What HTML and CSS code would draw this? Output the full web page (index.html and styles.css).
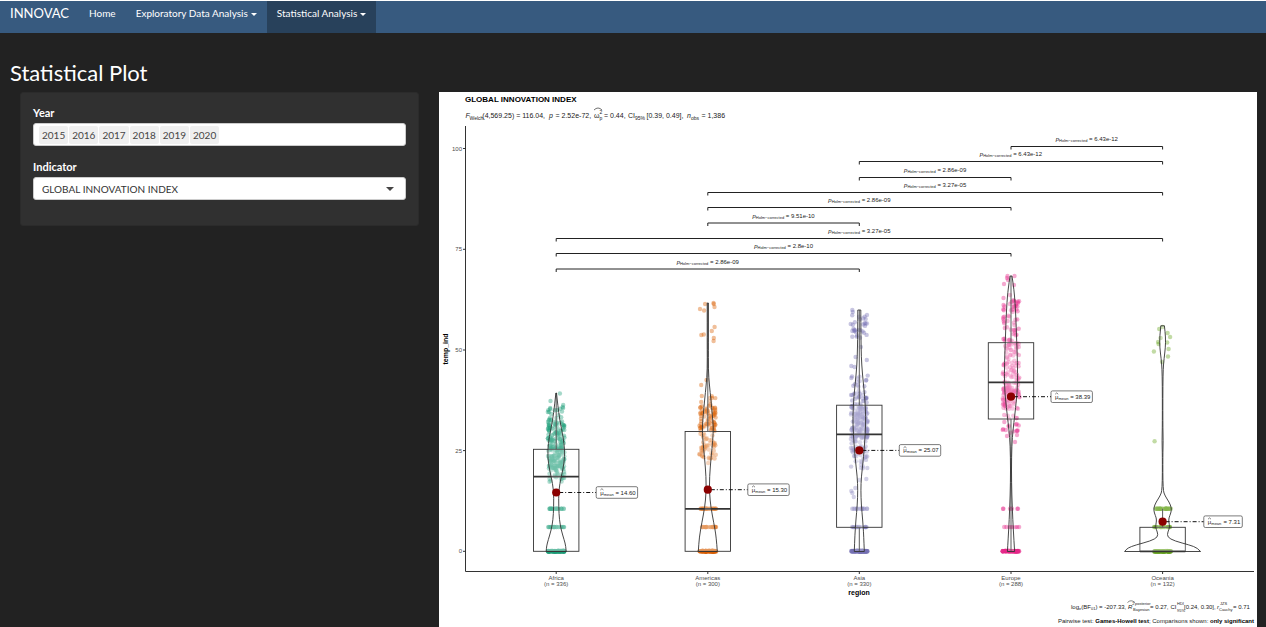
FILE: index.html
```html
<!DOCTYPE html>
<html lang="en">
<head>
<meta charset="utf-8">
<title>INNOVAC</title>
<link rel="stylesheet" href="styles.css">
</head>
<body>
<nav class="navbar">
  <a class="brand" href="#">INNOVAC</a>
  <a class="nav-item" href="#">Home</a>
  <button class="nav-item" type="button">Exploratory Data Analysis<span class="caret"></span></button>
  <button class="nav-item active" type="button">Statistical Analysis<span class="caret"></span></button>
</nav>
<h1 class="page-title">Statistical Plot</h1>
<main class="layout">
  <form class="well">
    <div class="field">
      <label for="year">Year</label>
      <div class="tags">
        <span class="tag">2015</span><span class="tag">2016</span><span class="tag">2017</span><span class="tag">2018</span><span class="tag">2019</span><span class="tag">2020</span>
        <input id="year" type="text" autocomplete="off">
      </div>
    </div>
    <div class="field">
      <label for="indicator">Indicator</label>
      <div class="select-wrap">
        <select id="indicator"><option>GLOBAL INNOVATION INDEX</option></select>
        <span class="caret select-caret"></span>
      </div>
    </div>
  </form>
  <section class="plot">
    <svg id="chart" class="chart" viewBox="439 92 818 535" role="img" aria-label="Global Innovation Index by region"></svg>
  </section>
</main>
<script src="chart.js"></script>
</body>
</html>
```
FILE: styles.css
```css
* { box-sizing: border-box; }
body {
  margin: 0;
  border-top: 1px solid #fff;
  background: #222;
  color: #fff;
  font: 10px/16px Lato, "Open Sans", sans-serif;
}
.navbar {
  display: flex;
  height: 32px;
  background: #375a7f;
}
.brand, .nav-item {
  display: flex;
  align-items: flex-start;
  padding: 4px 10px;
  border: 0;
  background: none;
  color: #fff;
  font: inherit;
  text-decoration: none;
  white-space: nowrap;
}
.brand { font-size: 13px; }
.nav-item.active { background: #28415b; }
.caret {
  align-self: flex-start;
  margin: 8px 0 0 3px;
  border: 3px solid transparent;
  border-top-color: currentColor;
  border-bottom: 0;
}
.page-title {
  margin: 0;
  padding: 26px 10px 5px;
  font-size: 22px;
  line-height: 28px;
  font-weight: 400;
}
.layout {
  display: grid;
  grid-template-columns: 399fr 818fr;
  gap: 20px;
  align-items: start;
  padding: 0 9px 0 20px;
}
.well {
  padding: 12px;
  border: 1px solid #2b2b2b;
  border-radius: 3px;
  background: #303030;
}
.field { margin-bottom: 13px; }
.field label {
  display: block;
  margin-bottom: 2px;
  font-size: 11px;
  font-weight: 700;
}
.tags, .select-wrap {
  display: flex;
  align-items: center;
  position: relative;
  height: 23px;
  border: 1px solid #ccc;
  border-radius: 3px;
  background: #fff;
  color: #464545;
}
.tags {
  gap: 1px;
  padding: 0 5px;
}
.tag {
  padding: 1px 3px;
  border-radius: 2px;
  background: #efefef;
}
.tags input {
  flex: 1;
  min-width: 0;
  border: 0;
  outline: 0;
  background: none;
  font: inherit;
}
.select-wrap select {
  width: 100%;
  height: 100%;
  padding: 0 8px;
  border: 0;
  appearance: none;
  background: none;
  color: #333;
  font: inherit;
}
.select-caret {
  position: absolute;
  top: 9px;
  right: 11px;
  margin: 0;
  border-width: 4px;
  border-bottom: 0;
  pointer-events: none;
}
.plot { background: #fff; }
.chart {
  display: block;
  width: 100%;
  font-family: "Liberation Sans", Arial, sans-serif;
  font-size: 6px;
  fill: #222;
}
.chart .title { font-size: 8px; font-weight: 700; fill: #000; }
.chart .subtitle { font-size: 7px; }
.chart .axis-title { font-size: 7px; font-weight: 700; fill: #000; }
.chart .tick { fill: #4d4d4d; }
.chart .sub { font-size: 4px; }
.chart .sub5 { font-size: 5px; }
.chart .it { font-style: italic; }
.chart .b { font-weight: 700; fill: #000; }
.chart .line { fill: none; stroke: #333; stroke-width: 1; }
.chart .bracket { fill: none; stroke: #222; stroke-width: 1; }
.chart .shape { fill: #fff; fill-opacity: .2; stroke: #333; stroke-width: .9; }
.chart .median { stroke: #333; stroke-width: 1.7; }
.chart .leader { stroke: #111; stroke-width: 1; stroke-dasharray: 1 2 4 2; }
.chart .callout { fill: #fff; stroke: #444; stroke-width: .7; }
```
FILE: chart.js
```js
const out = [];
const add = s => out.push(s);
const label = (x, y, s, cls = "", anchor = "start") =>
  add(`<text x="${x}" y="${y}" class="${cls}" text-anchor="${anchor}">${s}</text>`);

let seed = 17;
const rand = () => (seed = (seed * 16807) % 2147483647) / 2147483647;

// profile: [y, half width]; bands: [yMin, yMax, count]; dots: [dx, y]
const groups = [
  { name: "Africa", n: 336, x: 556.2, color: "#1b9e77", mean: 492.5, value: "14.60",
    box: [449.3, 476.7, 551.3], whisker: [393, 551],
    profile: [[393,.3],[405,1.6],[420,3.5],[437,7],[450,8.5],[463,8],[477,5],[490,2.5],[507,2.5],[520,3.2],[530,5],[540,8],[546,9.6],[551.5,10]],
    bands: [[408,425,26],[424,440,50],[438,468,135],[464,482,42],[508.7,508.8,24],[527,527.1,24],[550.8,551.6,100]],
    dots: [[3.7,393.5],[-5.7,401],[-6,408],[7,405],[6.5,407],[-5,414],[-6,409]] },
  { name: "Americas", n: 300, x: 707.8, color: "#d95f02", mean: 489.7, value: "15.30",
    box: [431.5, 508.8, 551.3], whisker: [303, 551],
    profile: [[303,.6],[345,.6],[370,.5],[385,1.6],[400,3.2],[415,4.5],[427,5.6],[440,5],[457,3.3],[477,1.7],[493,1.7],[507,3],[523,6],[537,8.5],[551.5,9.5]],
    bands: [[395,408,14],[407,425,45],[422,448,48],[445,463,26],[508.7,508.8,26],[527,527.1,26],[550.8,551.6,100]],
    dots: [[-2.7,304],[5.7,303],[6,304],[6.7,307],[-7.8,309],[-3.7,310.5],[6.8,327],[4,331],[-6.5,335],[-4,334.5],[6,338],[5.8,341],[-1.3,380],[-6.6,385],[-6,396]] },
  { name: "Asia", n: 330, x: 859.3, color: "#7570b3", mean: 450.4, value: "25.07",
    box: [405.2, 434.3, 527.3], whisker: [310, 551],
    profile: [[310,1.5],[335,1.6],[357,2],[373,3],[397,5.5],[417,6.5],[433,6],[457,4.3],[477,2],[490,1.5],[505,2],[520,3.4],[535,4.4],[551.5,5]],
    bands: [[315,340,24],[375,395,16],[393,410,34],[407,438,120],[435,456,45],[455,470,16],[508.7,508.8,15],[527,527.1,15],[550.8,551.6,100]],
    dots: [[-7,310],[-6.5,312],[7.7,315],[-8.6,324],[-5,330],[-5,331],[-3.5,332],[-7,331],[1.5,347],[-3.7,357],[7.5,360],[-8,366],[-4.7,367],[-8,378],[7,380],[7,479],[-4,488],[-8,491],[-7,493],[-5.5,497],[0,480],[8,468]] },
  { name: "Europe", n: 288, x: 1011, color: "#e7298a", mean: 396.7, value: "38.39",
    box: [342.7, 382.3, 419], whisker: [276, 551],
    profile: [[276,1],[290,3],[302,4],[318,4.9],[342,5.7],[362,6.5],[385,6.6],[400,5.4],[415,3.8],[430,2],[445,.8],[470,.4],[495,.8],[520,1.8],[540,2.9],[551.5,3.6]],
    bands: [[300,325,36],[325,345,26],[343,375,55],[374,392,48],[390,410,56],[415,433,20],[527,527.1,9],[550.8,551.6,70]],
    dots: [[-3.5,276],[3.5,276],[-3,280],[-7,284],[3,285],[-4,278],[-7.5,298],[-1,295],[7,303],[-7.5,305],[4,442],[-4,436],[6,435],
      [-8,508.8],[-7.6,508.8],[7,508.8],[6.4,508.8],[0,508.8],[-1,508.8],[1,508.8]] },
  { name: "Oceania", n: 132, x: 1162.6, color: "#66a61e", mean: 521.7, value: "7.31",
    box: [527.3, 551.3, 551.3], whisker: [508.8, 551],
    profile: [[325.8,1.8],[337,3],[348,2.8],[358,1.5],[372,.3],[425,.2],[441,.6],[455,.2],[490,.3],[496,2.5],[502,6.5],[508,9],[513,8.3],[518,6.2],[522,6.2],[527,7.2],[532,5.2],[537,4.6],[541,12],[545,27],[548,35],[551.5,38]],
    bands: [[508.7,508.8,30],[527,527.1,24],[551,551.8,75]],
    dots: [[-3.4,329],[0,327],[5,333],[7.5,337],[-4.5,342],[-4,344],[4.6,342.5],[6,349],[-8.7,351.5],[5.4,356.5],[-.5,362],[-2,338],[-8,441.3]] }
];

// Smooth curve through the points by way of their midpoints
function curve(points) {
  let d = "";
  for (let i = 1; i < points.length - 1; i++) {
    const [x, y] = points[i], [nx, ny] = points[i + 1];
    d += `Q${x},${y} ${(x + nx) / 2},${(y + ny) / 2}`;
  }
  const last = points[points.length - 1];
  return d + `L${last[0]},${last[1]}`;
}

// Titles
label(465, 101.5, "GLOBAL INNOVATION INDEX", "title");
const sy = 118;
label(465.5, sy, "F", "subtitle it");
label(469.5, sy + 1.5, "Welch", "sub5");
label(482.3, sy, "(4,569.25) = 116.04,", "subtitle");
label(549, sy, "p", "subtitle it");
label(555.5, sy, "= 2.52e-72,", "subtitle");
label(594, sy, "ω", "subtitle");
label(599.5, sy - 4, "2", "sub5");
label(599.5, sy + 2, "p", "sub5");
add(`<path class="line" d="M594 110Q598 106 602 110" style="stroke-width:.7"/>`);
label(604, sy, "= 0.44,", "subtitle");
label(628, sy, "CI", "subtitle");
label(635, sy + 1.5, "95%", "sub5");
label(646.5, sy, "[0.39, 0.49],", "subtitle");
label(687, sy, "n", "subtitle it");
label(691, sy + 1.5, "obs", "sub5");
label(701.5, sy, "= 1,386", "subtitle");

// Points, boxes, violins
for (const g of groups) {
  const dot = (x, y) => add(`<circle cx="${x.toFixed(1)}" cy="${y.toFixed(1)}" r="2.2"/>`);
  add(`<g fill="${g.color}" fill-opacity=".4">`);
  for (const [a, b, n] of g.bands)
    for (let i = 0; i < n; i++) dot(g.x + (rand() * 2 - 1) * 8.4, a + rand() * (b - a));
  for (const [dx, y] of g.dots) dot(g.x + dx, y);
  add(`</g>`);
  const [top, med, bottom] = g.box;
  add(`<path class="line" d="M${g.x} ${g.whisker[0]}V${top}M${g.x} ${bottom}V${g.whisker[1]}"/>`);
  add(`<rect class="shape" x="${g.x - 22.7}" y="${top}" width="45.4" height="${bottom - top}"/>`);
  add(`<path class="median" d="M${g.x - 22.7} ${med}H${g.x + 22.7}"/>`);
  const right = g.profile.map(([y, w]) => [g.x + w, y]);
  const left = g.profile.map(([y, w]) => [g.x - w, y]);
  add(`<path class="shape" d="M${left[0]}${curve(left)}L${right[right.length - 1]}${curve(right.slice().reverse())}Z"/>`);
}

// Mean markers with callouts
for (const g of groups) {
  const bx = g.x + (g.name === "Oceania" ? 41.2 : 40);
  const bw = g.name === "Oceania" ? 38.5 : 41.4;
  add(`<path class="leader" d="M${g.x} ${g.mean}H${bx}"/>`);
  add(`<circle cx="${g.x}" cy="${g.mean}" r="4.1" fill="#8b0000"/>`);
  add(`<rect class="callout" x="${bx}" y="${g.mean - 5.8}" width="${bw}" height="11.6" rx="1.5"/>`);
  label(bx + 4, g.mean + 2, "μ");
  add(`<path class="line" style="stroke-width:.6" d="M${bx + 4.2} ${g.mean - 2.5}l1.5 -1.3l1.5 1.3"/>`);
  label(bx + 7.5, g.mean + 3, "mean", "sub");
  label(bx + bw - 2, g.mean + 2, `= ${g.value}`, "", "end");
}

// Pairwise comparison brackets: [from, to, y, p]
[[3,4,146.5,"6.43e-12"],[2,4,161.5,"6.43e-12"],[2,3,177.5,"2.86e-09"],[1,4,192.5,"3.27e-05"],
 [1,3,207.5,"2.86e-09"],[1,2,223,"9.51e-10"],[0,4,238.5,"3.27e-05"],[0,3,253.5,"2.8e-10"],[0,2,269,"2.86e-09"]]
.forEach(([a, b, y, p]) => {
  const x1 = groups[a].x, x2 = groups[b].x, m = (x1 + x2) / 2;
  add(`<path class="bracket" d="M${x1} ${y + 3}V${y}H${x2}V${y + 3}"/>`);
  label(m, y - 5.5, `<tspan class="it">p</tspan><tspan class="sub" dy="1.2">Holm−corrected</tspan><tspan dy="-1.2"> = ${p}</tspan>`, "", "middle");
});

// Axes
add(`<path class="line" d="M465.5 126V571.5H1254"/>`);
[[148.5,100],[249.3,75],[350,50],[450.6,25],[551.3,0]].forEach(([y, v]) => {
  add(`<path class="line" d="M463 ${y}H465.5"/>`);
  label(462, y + 2, v, "tick", "end");
});
for (const g of groups) {
  add(`<path class="line" d="M${g.x} 571.5V574"/>`);
  label(g.x, 580, g.name, "tick", "middle");
  label(g.x, 586, `(n = ${g.n})`, "tick", "middle");
}
label(859, 594.5, "region", "axis-title", "middle");
add(`<text class="axis-title" text-anchor="middle" transform="translate(447.5 349) rotate(-90)">temp_ind</text>`);

// Caption
const cy = 609;
label(1071, cy, `log<tspan class="sub" dy="1">e</tspan><tspan dy="-1">(BF</tspan><tspan class="sub" dy="1">01</tspan><tspan dy="-1">) = -207.33,</tspan>`);
label(1128, cy, "R", "it");
add(`<path class="line" style="stroke-width:.6" d="M1127.5 602.5Q1131 599 1135 602.5"/>`);
label(1132.3, cy - 4, "2", "sub");
label(1135, cy - 4, "posterior", "sub");
label(1133, cy + 2, "Bayesian", "sub");
label(1150, cy, "= 0.27,");
label(1170.5, cy, "CI");
label(1177, cy - 4, "HDI", "sub");
label(1177, cy + 3, "95%", "sub");
label(1184, cy, "[0.24, 0.30],");
label(1217, cy, "r", "it");
label(1220, cy - 4, "JZS", "sub");
label(1219, cy + 2, "Cauchy", "sub");
label(1233, cy, "= 0.71");
label(1254, 623, `Pairwise test: <tspan class="b">Games-Howell test</tspan>; Comparisons shown: <tspan class="b">only significant</tspan>`, "", "end");

document.getElementById("chart").innerHTML = out.join("");
```
